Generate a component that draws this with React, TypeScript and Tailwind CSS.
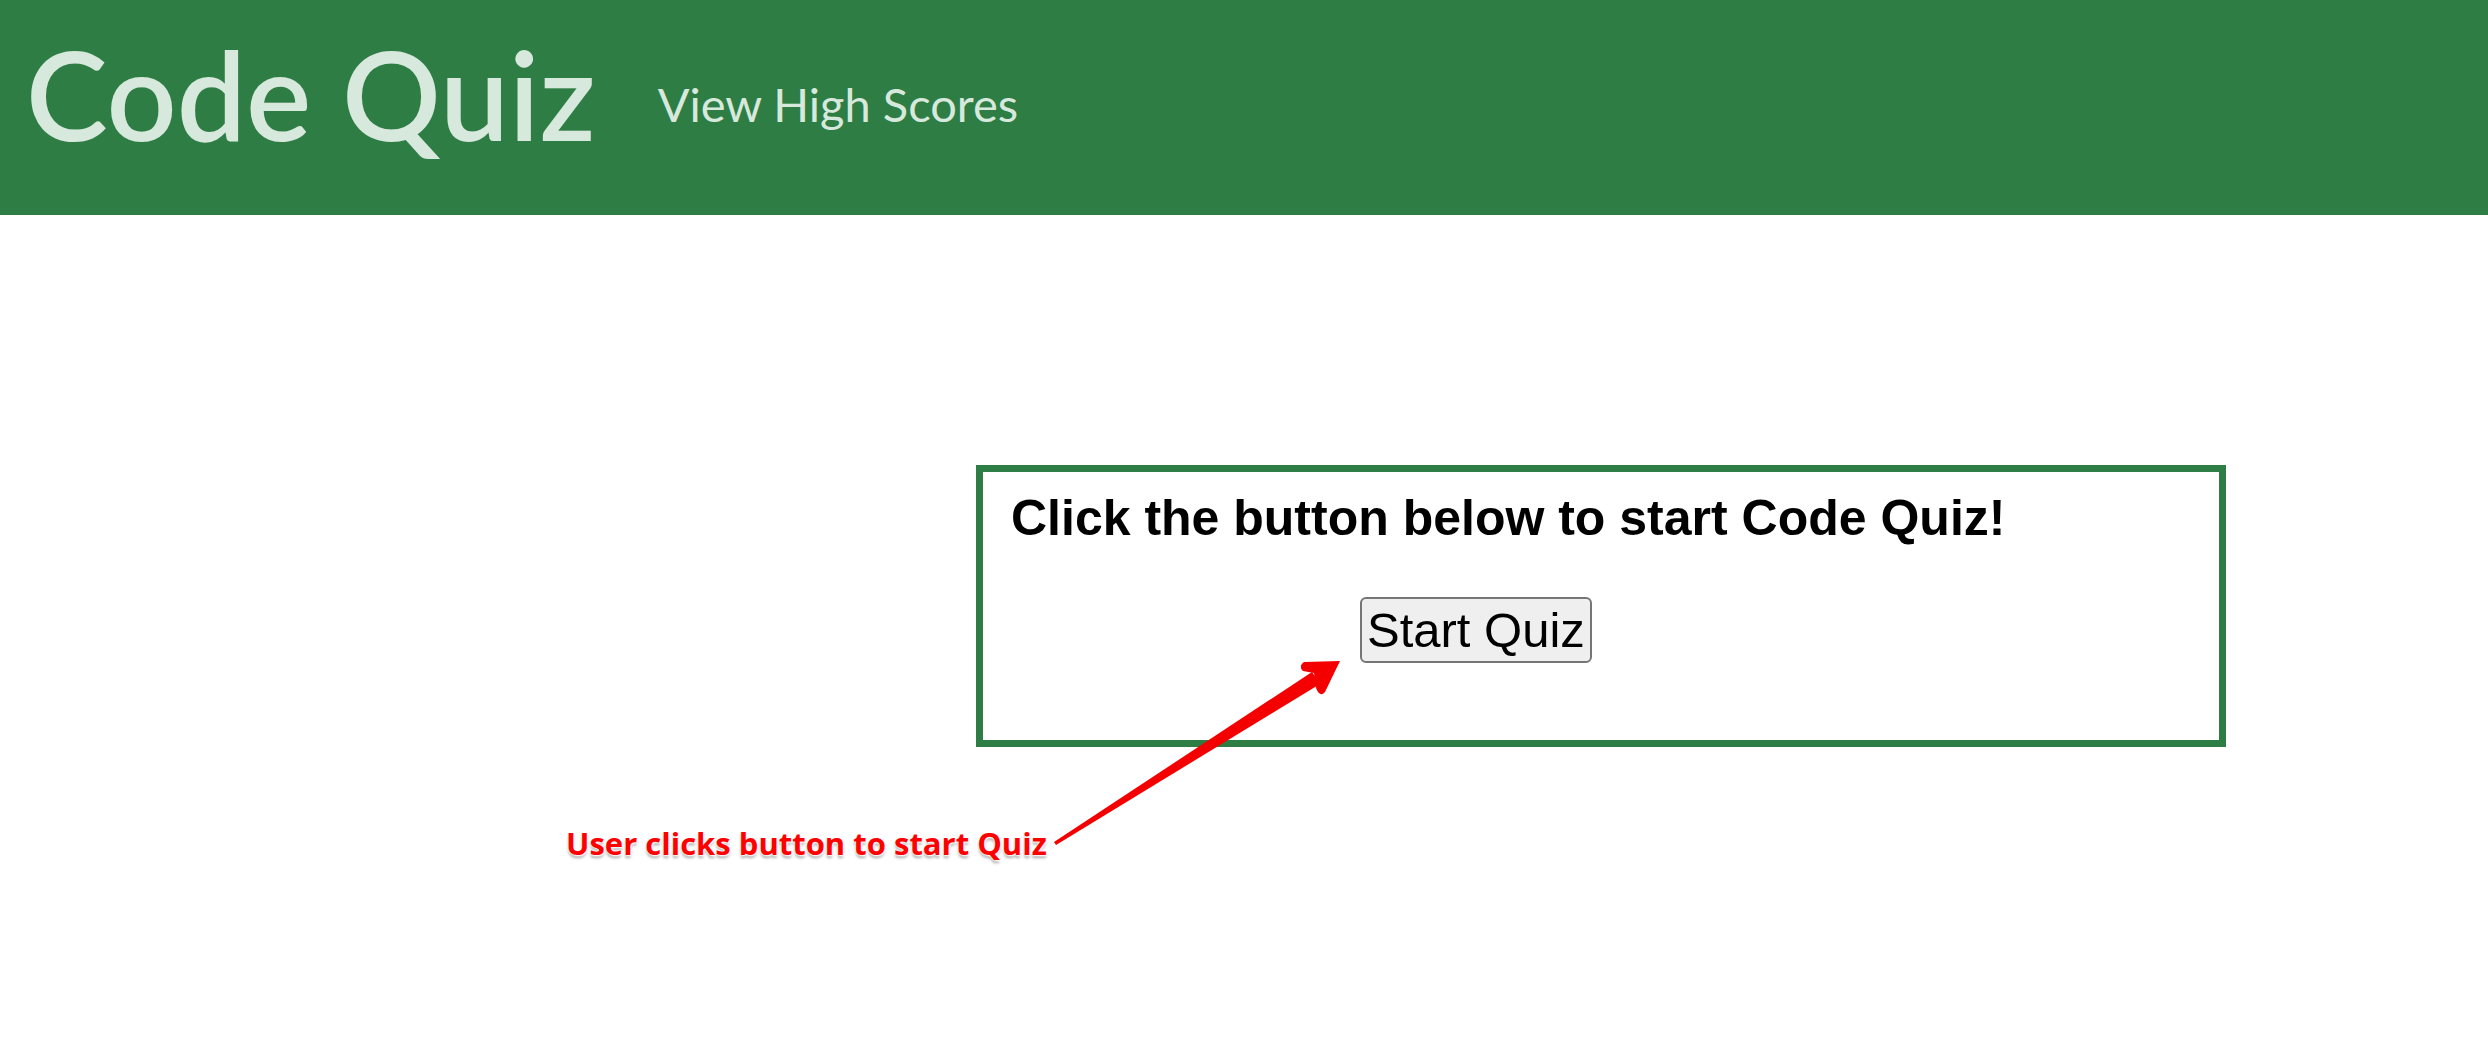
import React from 'react';

const headerFont = { fontFamily: 'Lato, "Open Sans", sans-serif' };

function Annotation() {
  return (
    <div className="pointer-events-none absolute inset-0">
      <svg className="absolute left-0 top-0" width="2488" height="1048" viewBox="0 0 2488 1048">
        {/* shaft */}
        <polygon points="1056,845 1320,684 1312,672 1054,842" fill="#f40000" />
        {/* head */}
        <path
          d="M1340,661 L1304,662 Q1298,666 1303,671 L1314,673 L1316,688 Q1320,698 1325,692 Z"
          fill="#f40000"
        />
      </svg>
      <div
        className="absolute left-[566px] top-[828px] text-[31px] font-bold leading-none text-[#ff0000] whitespace-nowrap [text-shadow:0_0_2px_#fff,0_0_2px_#fff,1px_1px_2px_#fff,0_3px_3px_rgba(0,0,0,0.35)]"
        style={{ fontFamily: '"Open Sans", sans-serif' }}
      >
        User clicks button to start Quiz
      </div>
    </div>
  );
}

export default function App() {
  return (
    <div className="relative h-[1048px] w-[2488px] overflow-hidden bg-white">
      {/* Header */}
      <header className="flex h-[215px] items-start bg-[#2e7d44] pl-[26px]">
        <h1
          className="mt-[19px] text-[123px] font-semibold leading-[150px] text-[#d7e8dc]"
          style={headerFont}
        >
          Code Quiz
        </h1>
        <a
          className="ml-[62px] mt-[72px] text-[47px] leading-[64px] text-[#d7e8dc]"
          style={headerFont}
        >
          View High Scores
        </a>
      </header>

      {/* Quiz card */}
      <main className="pt-[250px]">
        <section className="ml-[976px] h-[282px] w-[1250px] border-[7px] border-[#2e7d44] px-[28px] pt-[17px]">
          <h2
            className="text-[50px] font-bold leading-[58px] text-black"
            style={{ fontFamily: '"Liberation Sans", Arial, sans-serif' }}
          >
            Click the button below to start Code Quiz!
          </h2>
          <div className="mt-[50px] pl-[349px]">
            <button
              className="h-[66px] rounded-[6px] border-2 border-[#767676] bg-[#efefef] px-[5px] text-[49px] leading-[58px] text-black"
              style={{ fontFamily: '"Liberation Sans", Arial, sans-serif' }}
            >
              Start Quiz
            </button>
          </div>
        </section>
      </main>

      <Annotation />
    </div>
  );
}
